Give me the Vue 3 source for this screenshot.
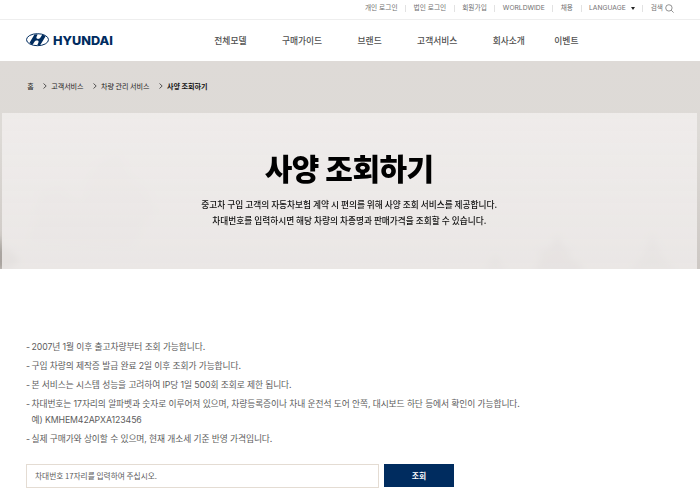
<template>
  <div class="page">
    <header>
      <ul class="util">
        <li v-for="item in utilMenu" :key="item">
          {{ item }}
          <i v-if="item === 'LANGUAGE'" class="caret"></i>
        </li>
        <li class="search">
          검색
          <svg width="9" height="9" viewBox="0 0 9 9">
            <circle cx="3.9" cy="3.9" r="3.2" />
            <path d="M6.2 6.2L8.6 8.6" />
          </svg>
        </li>
      </ul>
      <div class="gnb">
        <svg class="logo" width="88" height="14" viewBox="0 0 88 14">
          <ellipse cx="11.5" cy="6.7" rx="11" ry="6" fill="none" stroke="#002c5f" stroke-width="1" />
          <path
            d="M8.4 1.6C7 4 5.2 7.2 3.4 10.1C4.4 11 5.6 11.5 6.8 11.8C7.8 9.6 8.8 8 10 7.6C11.5 7.2 12.7 7.8 12.6 8.8C12.5 9.8 11.8 11.2 11.2 12.2L14.2 12C16 9.5 17.8 6.3 19.6 3.3C18.6 2.4 17.4 1.9 16.2 1.6C15.2 3.7 14.2 5.4 13 5.8C11.5 6.2 10.3 5.6 10.4 4.6C10.5 3.6 11.2 2.2 11.8 1.2Z"
            fill="#002c5f"
          />
          <text x="27" y="11.6" textLength="60" lengthAdjust="spacingAndGlyphs">HYUNDAI</text>
        </svg>
        <nav>
          <a v-for="menu in mainMenu" :key="menu">{{ menu }}</a>
        </nav>
      </div>
    </header>

    <section class="hero">
      <svg class="scenery" width="700" height="208" viewBox="0 0 700 208">
        <defs>
          <filter id="soft" x="-30%" y="-30%" width="160%" height="160%">
            <feGaussianBlur stdDeviation="3" />
          </filter>
        </defs>
        <g filter="url(#soft)" fill="#7d7571">
          <path d="M-12 208V172L0 178L3 187L12 190L20 200L8 208Z" opacity="0.45" />
          <path d="M30 180L40 130L60 125L80 140L95 105L118 92L130 115L148 130L155 150L130 185Z" opacity="0.08" />
          <path d="M534 210L542 196L537 191L549 187L558 174L565 187L572 190L568 196L582 204V212Z" opacity="0.3" />
          <path d="M630 210L642 196L646 186L652 172L659 187L663 196L676 210Z" opacity="0.2" />
          <path d="M485 210L495 191L506 210Z" opacity="0.2" />
        </g>
      </svg>
      <ol class="breadcrumb">
        <li v-for="(path, i) in paths" :key="path">
          <svg v-if="i > 0" width="4" height="6" viewBox="0 0 4 6"><path d="M0.5 0.5L3.2 3L0.5 5.5" /></svg>
          <span>{{ path }}</span>
        </li>
      </ol>
      <div class="title-box">
        <h1>사양 조회하기</h1>
        <p>중고차 구입 고객의 자동차보험 계약 시 편의를 위해 사양 조회 서비스를 제공합니다.</p>
        <p>차대번호를 입력하시면 해당 차량의 차종명과 판매가격을 조회할 수 있습니다.</p>
      </div>
    </section>

    <main>
      <ul class="notice">
        <li v-for="notice in notices" :key="notice">{{ notice }}</li>
      </ul>
      <form @submit.prevent="search">
        <input v-model="vin" type="text" maxlength="17" placeholder="차대번호 17자리를 입력하여 주십시오." />
        <button type="submit">조회</button>
      </form>
    </main>
  </div>
</template>

<script setup>
import { ref } from 'vue'

const utilMenu = ['개인 로그인', '법인 로그인', '회원가입', 'WORLDWIDE', '채용', 'LANGUAGE']
const mainMenu = ['전체모델', '구매가이드', '브랜드', '고객서비스', '회사소개', '이벤트']
const paths = ['홈', '고객서비스', '차량 관리 서비스', '사양 조회하기']
const notices = [
  '2007년 1월 이후 출고차량부터 조회 가능합니다.',
  '구입 차량의 제작증 발급 완료 2일 이후 조회가 가능합니다.',
  '본 서비스는 시스템 성능을 고려하여 IP당 1일 500회 조회로 제한 됩니다.',
  '차대번호는 17자리의 알파벳과 숫자로 이루어져 있으며, 차량등록증이나 차내 운전석 도어 안쪽, 대시보드 하단 등에서 확인이 가능합니다.\n예) KMHEM42APXA123456',
  '실제 구매가와 상이할 수 있으며, 현재 개소세 기준 반영 가격입니다.'
]

const vin = ref('')

// 차대번호는 대문자로 통일
const search = () => {
  vin.value = vin.value.trim().toUpperCase()
}
</script>

<style>
body {
  background: #fff;
  overflow: hidden;
}
</style>

<style scoped>
.page {
  height: 493px;
  overflow: hidden;
  font-family: "Noto Sans CJK KR", sans-serif;
  color: #5c5c5c;
}

ul, ol, h1, p {
  margin: 0;
  padding: 0;
  list-style: none;
}

.util {
  display: flex;
  justify-content: flex-end;
  box-sizing: border-box;
  height: 20px;
  padding: 3px 26px 0 0;
  border-bottom: 1px solid #eee;
  font-family: Inter, "Noto Sans CJK KR", sans-serif;
  font-size: 6.7px;
  line-height: 10px;
  color: #707070;
}

.util li {
  display: flex;
  align-items: center;
  height: 10px;
  white-space: nowrap;
}

.util li + li::before {
  content: "";
  width: 1px;
  height: 7px;
  margin: 0 7.5px;
  background: #e2e2e2;
}

.caret {
  margin-left: 5px;
  border: 2px solid transparent;
  border-top: 3px solid #222;
  border-bottom: 0;
}

.search svg {
  margin-left: 2px;
  fill: none;
  stroke: #777;
  stroke-width: 0.8;
}

.gnb {
  display: flex;
  align-items: center;
  height: 41px;
  padding-left: 25.5px;
}

.logo {
  flex: none;
  margin-bottom: 2px;
}

.logo text {
  font-family: Inter, sans-serif;
  font-size: 12.2px;
  font-weight: 800;
  fill: #002c5f;
}

nav {
  display: flex;
  gap: 35.4px;
  margin-left: 100.8px;
  font-size: 8.75px;
  font-weight: 500;
  line-height: 14px;
  color: #505050;
}

nav a:last-child {
  margin-left: -6px;
}

.hero {
  position: relative;
  box-sizing: border-box;
  height: 208px;
  padding: 0 3.5px 0 2px;
  background: linear-gradient(#dedad7 0%, #dddad6 35%, #cdc8c4 100%);
}

.scenery {
  position: absolute;
  left: 0;
  top: 0;
}

.breadcrumb {
  position: relative;
  display: flex;
  align-items: center;
  height: 50px;
  padding: 0 0 2px 25.3px;
  font-size: 7.05px;
  line-height: 12px;
  color: #222;
}

.breadcrumb li {
  display: flex;
  align-items: center;
}

.breadcrumb svg {
  margin: 0 4.4px 0 9px;
  fill: none;
  stroke: #444;
  stroke-width: 0.9;
}

.breadcrumb li:last-child {
  font-weight: 700;
  color: #111;
}

.title-box {
  position: relative;
  box-sizing: border-box;
  height: 156px;
  padding-top: 34px;
  background: linear-gradient(rgba(240, 237, 236, 0.9), rgba(239, 236, 235, 0.85));
  text-align: center;
}

h1 {
  margin-bottom: 9px;
  font-size: 30px;
  font-weight: 900;
  line-height: 41px;
  letter-spacing: -0.5px;
  color: #000;
}

.title-box p {
  font-size: 8.7px;
  font-weight: 500;
  line-height: 16px;
  color: #111;
}

main {
  padding: 70px 26px 0;
}

.notice li {
  position: relative;
  margin-bottom: 3px;
  padding-left: 5.5px;
  font-family: Inter, "Noto Sans CJK KR", sans-serif;
  font-size: 8.75px;
  letter-spacing: -0.1px;
  line-height: 16px;
  white-space: pre-line;
}

.notice li::before {
  content: "-";
  position: absolute;
  left: 0;
}

form {
  display: flex;
  gap: 5px;
  margin-top: 17px;
}

input {
  box-sizing: border-box;
  width: 353px;
  height: 24px;
  padding: 0 8px 1px;
  border: 1px solid #e4dcd3;
  border-radius: 0;
  outline: none;
  font-family: inherit;
  font-size: 7.7px;
  color: #5c5c5c;
}

input::placeholder {
  color: #5c5c5c;
}

button {
  width: 70px;
  height: 23px;
  padding: 0;
  border: 0;
  background: #002c5f;
  font-family: inherit;
  font-size: 7.8px;
  font-weight: 700;
  color: #fff;
}
</style>
